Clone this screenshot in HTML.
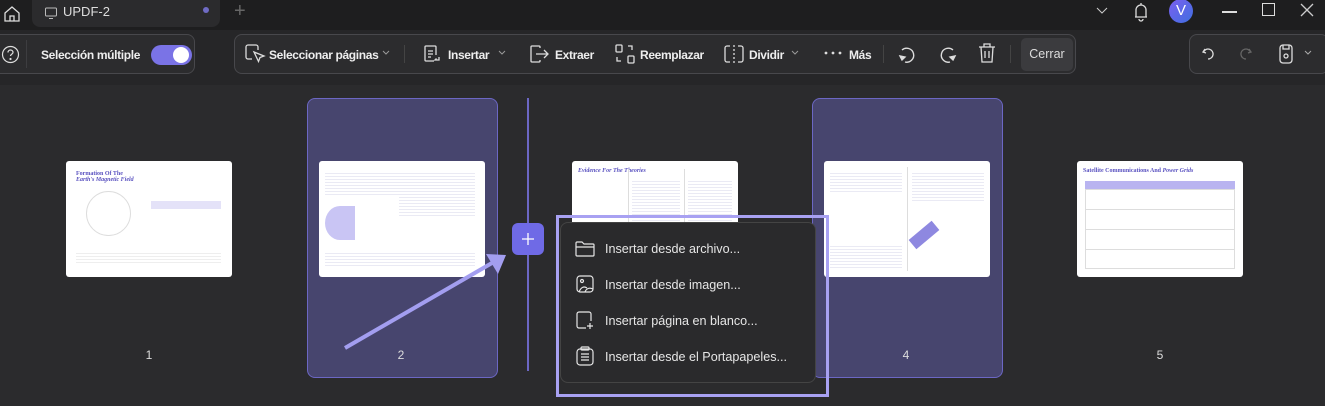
<!DOCTYPE html>
<html><head><meta charset="utf-8"><style>
*{margin:0;padding:0;box-sizing:border-box}
body{width:1325px;height:406px;overflow:hidden;background:#2b2b2d;font-family:"Liberation Sans",sans-serif;color:#fff;position:relative}
.abs{position:absolute}
.title{left:0;top:0;width:1325px;height:30px;background:#1e1e1f}
.tb{left:0;top:30px;width:1325px;height:55px;background:#262628}
.grp{border:1px solid #48484c;border-radius:8px;background:#2c2c2e}
.t{font-size:12px;font-weight:bold;color:#eee;white-space:nowrap;letter-spacing:-0.35px}
.thumb{background:#fff;border-radius:3px;width:166px;height:116px;overflow:hidden}
.num{font-size:12px;color:#ddd;width:20px;text-align:center}
.card{background:#47456e;border:1px solid #6c67c4;border-radius:8px;width:191px;height:280px;top:98px}
.menu{left:560px;top:222px;width:256px;height:161px;background:#2a2a2c;border:1px solid #444;border-radius:8px}
.mi{font-size:12.6px;color:#e6e6e6;left:44px;letter-spacing:0}
</style></head><body>
<div class="abs title"></div>
<svg class="abs" style="left:2px;top:4px" width="20" height="20" viewBox="0 0 20 20" fill="none" stroke="#ddd" stroke-width="1.3"><path d="M3 9 L10 3 L17 9 V17 H3Z"/><path d="M8 17v-5h4v5"/></svg>
<div class="abs" style="left:32px;top:0;width:188px;height:27px;background:#2b2b2d;border-radius:0 0 8px 8px"></div>
<svg class="abs" style="left:44px;top:6px" width="14" height="14" viewBox="0 0 14 14" fill="none" stroke="#bbb"><rect x="1.5" y="2" width="11" height="8" rx="1"/><path d="M5 12.5h4"/></svg>
<div class="abs" style="left:63px;top:4px;font-size:13px;color:#ddd">UPDF-2</div>
<div class="abs" style="left:203px;top:7px;width:6px;height:6px;border-radius:3px;background:#6f6bc4"></div>
<div class="abs" style="left:234px;top:0;font-size:20px;color:#666">+</div>
<svg class="abs" style="left:1094px;top:5px" width="16" height="12" viewBox="0 0 16 12" fill="none" stroke="#ccc"><path d="M3 3l5 5 5-5"/></svg>
<svg class="abs" style="left:1132px;top:1px" width="18" height="22" viewBox="0 0 18 22" fill="none" stroke="#ddd" stroke-width="1.3"><path d="M4 16V9a5 5 0 0110 0v7H3h12"/><path d="M9 2v2M7 18a2 2 0 004 0"/></svg>
<div class="abs" style="left:1169px;top:-1px;width:24px;height:24px;border-radius:12px;background:linear-gradient(135deg,#7b5ff0,#3f6fe0);font-size:15px;text-align:center;line-height:24px">V</div>
<div class="abs" style="left:1222px;top:11px;width:15px;height:1.5px;background:#ddd"></div>
<div class="abs" style="left:1262px;top:3px;width:13px;height:13px;border:1.5px solid #ddd"></div>
<svg class="abs" style="left:1300px;top:3px" width="14" height="14" viewBox="0 0 14 14" stroke="#ccc" stroke-width="1.3"><path d="M1 1l12 12M13 1L1 13"/></svg>

<div class="abs tb"></div>
<div class="abs grp" style="left:-8px;top:34px;width:203px;height:40px"></div>
<svg class="abs" style="left:1px;top:45px" width="19" height="19" viewBox="0 0 19 19" fill="none" stroke="#ddd" stroke-width="1.2"><circle cx="9.5" cy="9.5" r="8"/><path d="M7 7.5a2.5 2.5 0 115 0c0 1.5-2.5 1.8-2.5 3.5"/><circle cx="9.5" cy="14" r=".5"/></svg>
<div class="abs" style="left:26px;top:40px;width:1px;height:28px;background:#3d3d40"></div>
<div class="abs t" style="left:41px;top:48px">Selección múltiple</div>
<div class="abs" style="left:151px;top:45px;width:41px;height:20px;border-radius:10px;background:#7a73e6"></div>
<div class="abs" style="left:173px;top:47px;width:16px;height:16px;border-radius:8px;background:#fff"></div>

<div class="abs grp" style="left:234px;top:34px;width:842px;height:40px"></div>
<svg class="abs" style="left:244px;top:43px" width="22" height="22" viewBox="0 0 22 22" fill="none" stroke="#ddd" stroke-width="1.3"><path d="M8 16H4a2 2 0 01-2-2V4a2 2 0 012-2h8a2 2 0 012 2v3"/><path d="M10 9l10 4-4 1.5-1.5 4z"/></svg>
<div class="abs t" style="left:269px;top:48px">Seleccionar páginas</div>
<svg class="abs" style="left:382px;top:50px" width="8" height="6" viewBox="0 0 8 6" fill="none" stroke="#999"><path d="M1 1l3 3 3-3"/></svg>
<div class="abs" style="left:404px;top:45px;width:1px;height:18px;background:#444"></div>
<svg class="abs" style="left:422px;top:44px" width="20" height="20" viewBox="0 0 20 20" fill="none" stroke="#ddd" stroke-width="1.3"><path d="M12 17H4a1 1 0 01-1-1V3a1 1 0 011-1h9a1 1 0 011 1v8"/><path d="M6 7h5M6 10h5M6 13h3M17 13v3h-4l1.5-1.5"/></svg>
<div class="abs t" style="left:448px;top:48px">Insertar</div>
<svg class="abs" style="left:498px;top:50px" width="8" height="6" viewBox="0 0 8 6" fill="none" stroke="#999"><path d="M1 1l3 3 3-3"/></svg>
<svg class="abs" style="left:528px;top:44px" width="22" height="20" viewBox="0 0 22 20" fill="none" stroke="#ddd" stroke-width="1.3"><path d="M12 4V3a1 1 0 00-1-1H4a1 1 0 00-1 1v14a1 1 0 001 1h7a1 1 0 001-1v-1"/><path d="M8 10h12M16 6l4 4-4 4"/></svg>
<div class="abs t" style="left:555px;top:48px">Extraer</div>
<svg class="abs" style="left:614px;top:43px" width="22" height="22" viewBox="0 0 22 22" fill="none" stroke="#ddd" stroke-width="1.3"><rect x="2" y="2" width="6" height="7" rx="1"/><rect x="14" y="13" width="6" height="7" rx="1"/><path d="M14 3h4v4M3 14v4h4"/></svg>
<div class="abs t" style="left:640px;top:48px">Reemplazar</div>
<svg class="abs" style="left:723px;top:44px" width="22" height="20" viewBox="0 0 22 20" fill="none" stroke="#ddd" stroke-width="1.3"><path d="M7 2H4a2 2 0 00-2 2v12a2 2 0 002 2h3M15 2h3a2 2 0 012 2v12a2 2 0 01-2 2h-3"/><path d="M11 1v18" stroke-dasharray="2 2"/></svg>
<div class="abs t" style="left:749px;top:48px">Dividir</div>
<svg class="abs" style="left:791px;top:50px" width="8" height="6" viewBox="0 0 8 6" fill="none" stroke="#999"><path d="M1 1l3 3 3-3"/></svg>
<svg class="abs" style="left:824px;top:51px" width="20" height="4"><circle cx="2" cy="2" r="1.4" fill="#ddd"/><circle cx="9" cy="2" r="1.4" fill="#ddd"/><circle cx="16" cy="2" r="1.4" fill="#ddd"/></svg>
<div class="abs t" style="left:849px;top:48px">Más</div>
<div class="abs" style="left:883px;top:45px;width:1px;height:18px;background:#444"></div>
<svg class="abs" style="left:896px;top:43px" width="22" height="22" viewBox="0 0 22 22" fill="none" stroke="#ddd" stroke-width="1.4"><path d="M6 7a7 7 0 11 3 12"/><path d="M4 13l2 4 3-3z" fill="#ddd"/></svg>
<svg class="abs" style="left:937px;top:43px" width="22" height="22" viewBox="0 0 22 22" fill="none" stroke="#ddd" stroke-width="1.4"><path d="M16 7a7 7 0 10-3 12"/><path d="M18 13l-2 4-3-3z" fill="#ddd"/></svg>
<svg class="abs" style="left:977px;top:42px" width="20" height="22" viewBox="0 0 20 22" fill="none" stroke="#ddd" stroke-width="1.3"><path d="M2 5h16M7 5V2h6v3M4 5l1 15h10l1-15M8 9v7M12 9v7"/></svg>
<div class="abs" style="left:1010px;top:45px;width:1px;height:18px;background:#444"></div>
<div class="abs" style="left:1021px;top:38px;width:52px;height:33px;background:#3b3b3e;border-radius:5px;font-size:12.5px;color:#ddd;text-align:center;line-height:33px">Cerrar</div>

<div class="abs grp" style="left:1189px;top:34px;width:140px;height:40px"></div>
<svg class="abs" style="left:1201px;top:46px" width="16" height="16" viewBox="0 0 16 16" fill="none" stroke="#ddd" stroke-width="1.3"><path d="M4 3L2 6l3 1"/><path d="M2.5 6A5 5 0 117 13"/></svg>
<svg class="abs" style="left:1237px;top:46px" width="16" height="16" viewBox="0 0 16 16" fill="none" stroke="#666" stroke-width="1.3"><path d="M12 3l2 3-3 1"/><path d="M13.5 6A5 5 0 109 13"/></svg>
<svg class="abs" style="left:1278px;top:43px" width="16" height="22" viewBox="0 0 16 22" fill="none" stroke="#ddd" stroke-width="1.3"><rect x="2" y="2" width="12" height="18" rx="3"/><path d="M5 2v4h6V2"/><circle cx="8" cy="13" r="2"/></svg>
<svg class="abs" style="left:1304px;top:50px" width="8" height="6" viewBox="0 0 8 6" fill="none" stroke="#aaa"><path d="M1 1l3 3 3-3"/></svg>

<!-- content -->
<div class="abs card" style="left:307px"></div>
<div class="abs card" style="left:812px"></div>
<div class="abs" style="left:527px;top:98px;width:2px;height:273px;background:#6c67c4"></div>

<div class="abs thumb" style="left:66px;top:161px"><div style="margin:10px 0 0 10px;font:bold 6px 'Liberation Serif';color:#5a52c0">Formation Of The<br><i>Earth's Magnetic Field</i></div><div style="position:absolute;left:20px;top:30px;width:45px;height:45px;border:1px solid #ddd;border-radius:50%"></div><div style="position:absolute;left:85px;top:40px;width:70px;height:8px;background:#e4e2f8"></div><div style="position:absolute;left:10px;top:92px;width:145px;height:12px;background:repeating-linear-gradient(#eee 0 1px,#fff 1px 3px)"></div></div>
<div class="abs thumb" style="left:319px;top:161px"><div style="position:absolute;left:6px;top:12px;width:74px;height:22px;background:repeating-linear-gradient(#eaeaf4 0 1px,#fff 1px 3px)"></div><div style="position:absolute;left:6px;top:45px;width:30px;height:34px;background:#c9c5f4;border-radius:50% 0 0 50%"></div><div style="position:absolute;left:80px;top:12px;width:76px;height:45px;background:repeating-linear-gradient(#eaeaf4 0 1px,#fff 1px 3px)"></div><div style="position:absolute;left:6px;top:92px;width:150px;height:14px;background:repeating-linear-gradient(#eaeaf4 0 1px,#fff 1px 3px)"></div></div>
<div class="abs thumb" style="left:572px;top:161px"><div style="margin:7px 0 0 6px;font:italic bold 6px 'Liberation Serif';color:#5a52c0">Evidence For The Theories</div><div style="position:absolute;left:56px;top:8px;width:1px;height:100px;background:#ddd"></div><div style="position:absolute;left:112px;top:8px;width:1px;height:100px;background:#ddd"></div><div style="position:absolute;left:60px;top:20px;width:48px;height:40px;background:repeating-linear-gradient(#eaeaf4 0 1px,#fff 1px 3px)"></div><div style="position:absolute;left:116px;top:20px;width:44px;height:40px;background:repeating-linear-gradient(#eaeaf4 0 1px,#fff 1px 3px)"></div></div>
<div class="abs thumb" style="left:824px;top:161px"><div style="position:absolute;left:83px;top:6px;width:1px;height:104px;background:#ddd"></div><div style="position:absolute;left:6px;top:12px;width:72px;height:20px;background:repeating-linear-gradient(#eaeaf4 0 1px,#fff 1px 3px)"></div><div style="position:absolute;left:88px;top:12px;width:72px;height:30px;background:repeating-linear-gradient(#eaeaf4 0 1px,#fff 1px 3px)"></div><div style="position:absolute;left:85px;top:68px;width:30px;height:12px;background:#8e88e0;transform:rotate(-40deg)"></div><div style="position:absolute;left:6px;top:85px;width:72px;height:22px;background:repeating-linear-gradient(#eaeaf4 0 1px,#fff 1px 3px)"></div></div>
<div class="abs thumb" style="left:1077px;top:161px"><div style="margin:7px 0 0 6px;font:bold 6px 'Liberation Serif';color:#5a52c0">Satellite Communications And <i>Power Grids</i></div><div style="position:absolute;left:8px;top:20px;width:150px;height:8px;background:#b9b4f0"></div><div style="position:absolute;left:8px;top:28px;width:150px;height:80px;background:repeating-linear-gradient(#fff 0 19px,#ddd 19px 20px);border:1px solid #ddd"></div></div>

<div class="abs num" style="left:139px;top:348px">1</div>
<div class="abs num" style="left:391px;top:348px">2</div>
<div class="abs num" style="left:896px;top:348px">4</div>
<div class="abs num" style="left:1150px;top:348px">5</div>

<div class="abs" style="left:512px;top:223px;width:32px;height:32px;border-radius:6px;background:#6f6ae6"></div>
<svg class="abs" style="left:520px;top:231px" width="16" height="16" viewBox="0 0 16 16" stroke="#fff" stroke-width="1.3"><path d="M8 2v12M2 8h12"/></svg>
<svg class="abs" style="left:340px;top:250px" width="175" height="105" viewBox="0 0 175 105"><path d="M5 98 L152 13" stroke="#a39ef0" stroke-width="4"/><path d="M166 5 L146 4 L158 24Z" fill="#a39ef0"/></svg>

<div class="abs" style="left:556px;top:215px;width:273px;height:182px;border:3px solid #a8a1f2"></div>
<div class="abs menu">
<svg class="abs" style="left:14px;top:17px" width="20" height="18" viewBox="0 0 20 18" fill="none" stroke="#e6e6e6" stroke-width="1.2"><path d="M1 3a1 1 0 011-1h5l2 2h9a1 1 0 011 1v10a1 1 0 01-1 1H2a1 1 0 01-1-1z"/><path d="M1 7h18"/></svg>
<div class="abs mi" style="top:19px">Insertar desde archivo...</div>
<svg class="abs" style="left:15px;top:52px" width="18" height="18" viewBox="0 0 18 18" fill="none" stroke="#e6e6e6" stroke-width="1.2"><rect x="1" y="1" width="16" height="16" rx="3"/><circle cx="6" cy="6" r="1.5"/><path d="M3 17c2-5 5-6 8-4M9 17c1-3 4-5 8-3"/></svg>
<div class="abs mi" style="top:55px">Insertar desde imagen...</div>
<svg class="abs" style="left:15px;top:88px" width="18" height="18" viewBox="0 0 18 18" fill="none" stroke="#e6e6e6" stroke-width="1.2"><path d="M10 17H3a2 2 0 01-2-2V3a2 2 0 012-2h10a2 2 0 012 2v7"/><path d="M14 12v6M11 15h6"/></svg>
<div class="abs mi" style="top:91px">Insertar página en blanco...</div>
<svg class="abs" style="left:15px;top:123px" width="18" height="20" viewBox="0 0 18 20" fill="none" stroke="#e6e6e6" stroke-width="1.2"><rect x="1" y="3" width="16" height="16" rx="3"/><rect x="5" y="1" width="8" height="3" rx="1"/><path d="M5 8h8M5 11h8M5 14h8"/></svg>
<div class="abs mi" style="top:127px">Insertar desde el Portapapeles...</div>
</div>
</body></html>
